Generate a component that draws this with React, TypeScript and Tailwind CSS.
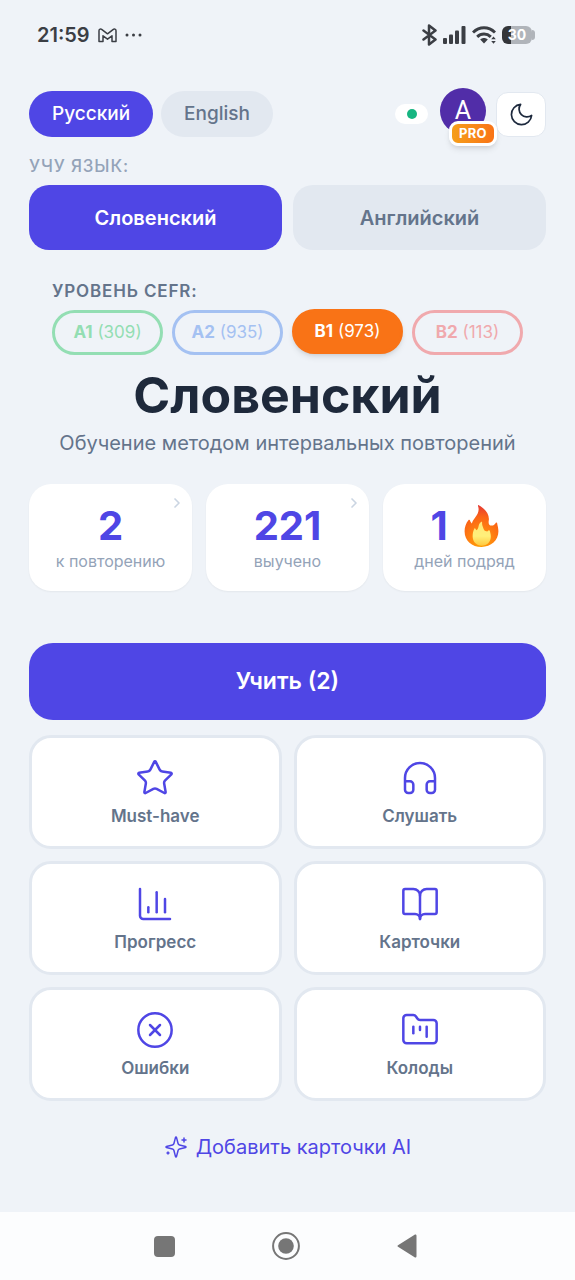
import clsx from "clsx";
import { useState } from "react";
import {
  BookOpen,
  ChartColumn,
  ChevronRight,
  CircleX,
  FolderKanban,
  Headphones,
  Star,
} from "lucide-react";

const levels = [
  { id: "A1", count: 309, idle: "border-[#93deb3] text-[#93deb3]" },
  { id: "A2", count: 935, idle: "border-[#a4c1f2] text-[#a4c1f2]" },
  { id: "B1", count: 973, idle: "border-[#fdba74] text-[#fdba74]" },
  { id: "B2", count: 113, idle: "border-[#f0a9ad] text-[#f0a9ad]" },
];

const actions = [
  { label: "Must-have", icon: Star },
  { label: "Слушать", icon: Headphones },
  { label: "Прогресс", icon: ChartColumn },
  { label: "Карточки", icon: BookOpen },
  { label: "Ошибки", icon: CircleX },
  { label: "Колоды", icon: FolderKanban },
];

const Flame = () => (
  <svg width="35" height="44" viewBox="0 0 36 44" aria-hidden="true">
    <defs>
      <radialGradient id="flame" cx="0.5" cy="0.95" r="0.95">
        <stop offset="0" stopColor="#ffa000" />
        <stop offset="0.35" stopColor="#ff870f" />
        <stop offset="0.7" stopColor="#fb6516" />
        <stop offset="1" stopColor="#e53935" />
      </radialGradient>
      <linearGradient id="core" x1="0" y1="0" x2="0" y2="1">
        <stop offset="0" stopColor="#ffe77a" />
        <stop offset="0.6" stopColor="#fff07a" />
        <stop offset="1" stopColor="#ffc83e" />
      </linearGradient>
    </defs>
    <path
      fill="url(#flame)"
      d="M15.2 .6c-.5-.5-1.1.1-.8.7 1.5 4.2.4 8-3.1 12.2-1.5 1.9-2.7 3.9-3.2 5.9-.9-.8-1.7-2-2-3.300-.2-.7-1-.8-1.400-.2C1.900 19.300.6 23.500.6 27.300.6 37 8.200 43.600 18 43.600S35.400 36.800 35.400 27.500c0-3.100-.9-5.700-1.300-8.300-.1-.8-1.100-1-1.500-.3-.9 1.600-2.200 2.600-4 2.700-2.700.1-3.700-1.900-3.100-5.200C26.500 10.300 21.700 3.900 15.200.6Z"
    />
    <path
      fill="url(#core)"
      d="M18.600 18.700c.2-.8-.6-1.300-1.200-.8-1.300 1.200-2.100 2.500-2.400 4.300-.3 2-1.100 3.300-2 4.100-.7-.2-1-.7-1.200-1.400-.2-.6-.9-.7-1.200-.1C9.400 27 8.900 29.800 8.900 32.600c0 5.800 3.800 9.600 9.300 9.600s9.400-3.900 9.400-9.200c0-2.800-.8-4.700-1.100-6.100-.1-.7-1-.9-1.400-.3-.5.7-1.200 1.100-2 .9-1.600-.3-2.600-1.500-3.200-3.300-.7-2-1.500-3.600-1.300-5.500Z"
    />
  </svg>
);

const stats = [
  { value: "2", label: "к повторению", link: true },
  { value: "221", label: "выучено", link: true },
  { value: "1", label: "дней подряд", flame: true },
];

const StatusBar = () => (
  <div className="flex h-[70px] items-center justify-between pr-10 pl-[37px] text-[#3b3e44]">
    <div className="flex items-center gap-2">
      <span className="text-xl font-semibold">21:59</span>
      <svg
        width="19"
        height="15"
        viewBox="0 0 19 15"
        fill="none"
        stroke="currentColor"
        strokeWidth="1.5"
        strokeLinejoin="round"
      >
        <path d="M1 13.500V2.800C1 1 2.700.6 4 1.600l5.500 4.200L15 1.600c1.300-1 3-.6 3 1.200v10.700h-4V7.800l-4.500 3.400L5 7.800v5.700Z" />
      </svg>
      <svg width="17" height="4" viewBox="0 0 17 4" fill="currentColor">
        <circle cx="2" cy="2" r="1.5" />
        <circle cx="8.5" cy="2" r="1.5" />
        <circle cx="15" cy="2" r="1.5" />
      </svg>
    </div>

    <div className="flex items-center gap-1.5">
      <svg
        width="15"
        height="22"
        viewBox="0 0 15 22"
        fill="none"
        stroke="currentColor"
        strokeWidth="2.5"
        strokeLinejoin="round"
        strokeLinecap="round"
      >
        <path d="m1.500 6.500 12 9-6.500 5V1.500l6.500 5-12 9" />
      </svg>
      <svg width="23" height="18" viewBox="0 0 23 18" fill="currentColor">
        <rect x="0" y="12" width="4" height="6" rx="1" />
        <rect x="6" y="8.5" width="4" height="9.5" rx="1" />
        <rect x="12" y="4.5" width="4" height="13.5" rx="1" />
        <rect x="18.5" y="0" width="4" height="18" rx="1" />
      </svg>
      <svg width="24" height="18" viewBox="0 0 24 18" fill="none">
        <g stroke="currentColor" strokeWidth="3">
          <path d="M1 6.500C7.500.2 16.500.2 23 6.500" />
          <path d="M5.200 10.800c4-3.800 9.600-3.800 13.600 0" />
        </g>
        <path
          d="M8.200 13.500c2.200-2 5.400-2 7.600 0L12 17.500Z"
          fill="currentColor"
        />
        <path
          d="m21.500 10.500 2.300 2.800h-4.600Zm0 7.300 2.300-2.800h-4.600Z"
          fill="currentColor"
        />
      </svg>
      <div className="flex items-center">
        <span className="flex h-[18px] w-[30px] items-center justify-center rounded-md bg-linear-to-r from-[#333539] from-30% to-[#b0b4ba] to-30% text-sm font-bold text-white">
          30
        </span>
        <span className="h-2.5 w-[3px] rounded-r-full bg-[#b0b4ba]" />
      </div>
    </div>
  </div>
);

const Header = () => {
  const [lang, setLang] = useState("Русский");

  return (
    <header className="flex h-[46px] items-center justify-between">
      <div className="flex gap-2">
        {["Русский", "English"].map((name) => (
          <button
            key={name}
            type="button"
            onClick={() => setLang(name)}
            className={clsx(
              "h-[46px] rounded-full px-[23px] text-[19px] font-medium",
              lang === name
                ? "bg-[#4f46e5] text-white"
                : "bg-[#e2e8f0] text-[#64748b]"
            )}
          >
            {name}
          </button>
        ))}
      </div>

      <div className="flex items-center">
        <span className="mr-3 flex h-5 w-[33px] items-center justify-center rounded-full bg-white">
          <span className="size-2.5 rounded-full bg-[#17b581]" />
        </span>
        <button
          type="button"
          title="Профиль"
          className="relative mr-2.5 mb-1.5 size-[46px] rounded-full bg-[#512da8] font-[Roboto,sans-serif] text-[25px] leading-[46px] text-white"
        >
          A
          <span className="absolute top-[33px] left-[9px] rounded-[9px] border-3 border-white bg-linear-to-r from-[#f59e1b] to-[#f97316] px-[7px] font-[Inter,sans-serif] text-[13px] leading-[19px] font-bold tracking-wide shadow-md">
            PRO
          </span>
        </button>
        <button
          type="button"
          title="Тёмная тема"
          className="flex h-[45px] w-[50px] items-center justify-center rounded-xl border border-slate-200 bg-white text-slate-800"
        >
          <svg
            width="27"
            height="27"
            viewBox="0 0 24 24"
            fill="none"
            stroke="currentColor"
            strokeWidth="1.5"
            strokeLinejoin="round"
          >
            <path d="M21 12.790A9 9 0 1 1 11.210 3 7 7 0 0 0 21 12.790Z" />
          </svg>
        </button>
      </div>
    </header>
  );
};

const Levels = () => {
  const [level, setLevel] = useState("B1");

  return (
    <section className="mt-[31px] px-[23px]">
      <h2 className="text-[17px] leading-5 font-semibold tracking-wider text-[#64748b]">
        УРОВЕНЬ CEFR:
      </h2>
      <div className="mt-[9px] grid grid-cols-4 gap-[9px]">
        {levels.map(({ id, count, idle }) => (
          <button
            key={id}
            type="button"
            onClick={() => setLevel(id)}
            className={clsx(
              "h-[45px] rounded-full border-3 text-[17px] whitespace-nowrap",
              level === id
                ? "-translate-y-px border-[#f97316] bg-[#f97316] text-white shadow-md"
                : idle
            )}
          >
            <b className="font-bold">{id}</b> <span>({count})</span>
          </button>
        ))}
      </div>
    </section>
  );
};

export default function App() {
  const [target, setTarget] = useState("Словенский");

  return (
    <div className="flex min-h-screen flex-col bg-[#eff3f8] font-[Inter,sans-serif]">
      <StatusBar />

      <main className="mt-[21px] flex flex-1 flex-col px-[29px]">
        <Header />

        <p className="mt-[19px] text-[17px] leading-5 font-medium tracking-wider text-[#94a3b8]">
          УЧУ ЯЗЫК:
        </p>
        <div className="mt-[9px] grid grid-cols-2 gap-[11px]">
          {["Словенский", "Английский"].map((name) => (
            <button
              key={name}
              type="button"
              onClick={() => setTarget(name)}
              className={clsx(
                "h-[65px] rounded-[20px] text-xl font-semibold",
                target === name
                  ? "bg-[#4f46e5] text-white"
                  : "bg-[#e2e8f0] text-[#64748b]"
              )}
            >
              {name}
            </button>
          ))}
        </div>

        <Levels />

        <h1 className="mt-2.5 text-center text-[50px] leading-[60px] font-bold text-[#1e293b]">
          {target}
        </h1>
        <p className="mt-1 text-center text-xl leading-7 text-[#64748b]">
          Обучение методом интервальных повторений
        </p>

        <div className="mt-[27px] grid grid-cols-3 gap-[14px]">
          {stats.map(({ value, label, link, flame }) => (
            <button
              key={label}
              type="button"
              className="relative flex h-[107px] flex-col items-center rounded-[22px] bg-white pt-[19px] shadow-xs"
            >
              {link && (
                <ChevronRight
                  size={16}
                  strokeWidth={2.5}
                  className="absolute top-[11px] right-[7px] text-slate-300"
                />
              )}
              <span className="flex h-[46px] items-center gap-4 text-[40px] font-bold text-[#4f46e5]">
                {value}
                {flame && <Flame />}
              </span>
              <span className="mt-0.5 text-base leading-5 text-[#94a3b8]">
                {label}
              </span>
            </button>
          ))}
        </div>

        <button
          type="button"
          className="mt-[52px] h-[77px] rounded-[24px] bg-[#4f46e5] text-[23px] font-semibold text-white"
        >
          Учить (2)
        </button>

        <div className="mt-[15px] grid grid-cols-2 gap-3">
          {actions.map(({ label, icon: Icon }) => (
            <button
              key={label}
              type="button"
              className="flex h-[114px] flex-col items-center rounded-[22px] border-3 border-[#e2e8f0] bg-white pt-5 text-[17px] leading-6 font-semibold text-[#64748b]"
            >
              <Icon size={40} strokeWidth={1.5} className="text-[#4f46e5]" />
              <span className="mt-1.5">{label}</span>
            </button>
          ))}
        </div>

        <a
          href="#ai"
          className="mt-8 mb-[50px] flex items-center justify-center gap-2 text-xl leading-7 text-[#4f46e5]"
        >
          <svg
            width="24"
            height="24"
            viewBox="0 0 24 24"
            fill="none"
            stroke="currentColor"
            strokeWidth="1.5"
            strokeLinecap="round"
            strokeLinejoin="round"
          >
            <path d="M9.937 15.500A2 2 0 0 0 8.500 14.063l-6.135-1.582a.5.5 0 0 1 0-.962L8.500 9.936A2 2 0 0 0 9.937 8.500l1.582-6.135a.5.5 0 0 1 .963 0L14.063 8.500A2 2 0 0 0 15.500 9.937l6.135 1.581a.5.5 0 0 1 0 .964L15.500 14.063a2 2 0 0 0-1.437 1.437l-1.582 6.135a.5.5 0 0 1-.963 0z" />
            <path d="M20 3v4M22 5h-4M4 17v2M5 18H3" />
          </svg>
          Добавить карточки AI
        </a>
      </main>

      <nav className="flex h-[68px] items-center justify-center gap-[97px] bg-[#fcfdfe] pr-1 text-[#767676]">
        <button type="button" title="Недавние">
          <span className="block size-[21px] rounded-[4px] bg-current" />
        </button>
        <button type="button" title="Домой">
          <svg width="28" height="28" viewBox="0 0 28 28" fill="currentColor">
            <circle
              cx="14"
              cy="14"
              r="12.9"
              fill="none"
              stroke="currentColor"
              strokeWidth="2"
            />
            <circle cx="14" cy="14" r="7.8" />
          </svg>
        </button>
        <button type="button" title="Назад">
          <svg width="20" height="24" viewBox="0 0 20 24" fill="currentColor">
            <path d="M1 11.200 17.600.7c.9-.6 1.900 0 1.900 1v20.600c0 1-1 1.600-1.900 1L1 12.800c-.6-.4-.6-1.200 0-1.600Z" />
          </svg>
        </button>
      </nav>
    </div>
  );
}
